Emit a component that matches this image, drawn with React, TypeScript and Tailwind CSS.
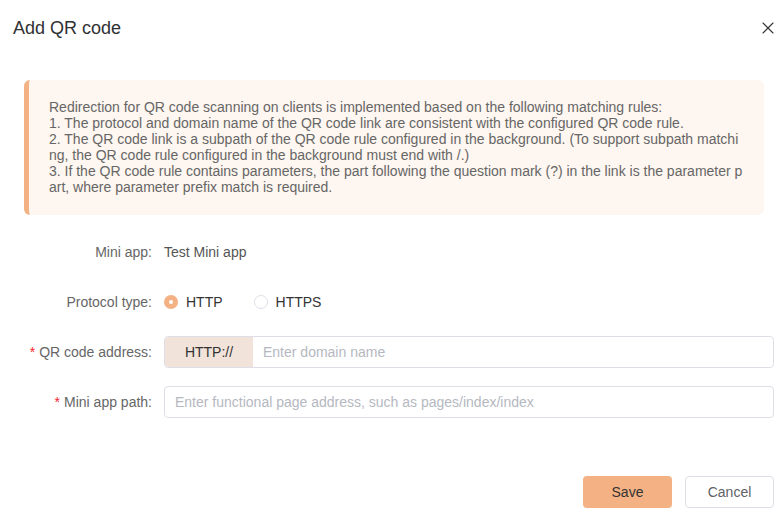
import { X } from 'lucide-react';

const rules = [
  'Redirection for QR code scanning on clients is implemented based on the following matching rules:',
  '1. The protocol and domain name of the QR code link are consistent with the configured QR code rule.',
  '2. The QR code link is a subpath of the QR code rule configured in the background. (To support subpath matching, the QR code rule configured in the background must end with /.)',
  '3. If the QR code rule contains parameters, the part following the question mark (?) in the link is the parameter part, where parameter prefix match is required.',
];

const FormRow = ({ label, required = false, children }: { label: string; required?: boolean; children: React.ReactNode }) => (
  <div className="flex items-center h-8">
    <label className="w-[164px] pr-3 text-right text-[14px] text-[#666] shrink-0">
      {required && <span className="text-[#f5222d] mr-1">*</span>}
      {label}
    </label>
    <div className="flex-1 flex items-center">{children}</div>
  </div>
);

const Radio = ({ checked, label }: { checked?: boolean; label: string }) => (
  <label className="flex items-center gap-2 text-[14px] text-[#333] cursor-pointer">
    {checked ? (
      <span className="w-[14px] h-[14px] rounded-full bg-[#f4b183] flex items-center justify-center">
        <span className="w-1 h-1 rounded-full bg-white" />
      </span>
    ) : (
      <span className="w-[14px] h-[14px] rounded-full border border-[#dcdfe6] bg-white" />
    )}
    {label}
  </label>
);

export default function App() {
  return (
    <div className="w-[783px] h-[523px] bg-white font-['Liberation_Sans',Arial,sans-serif] flex flex-col">
      <div className="flex items-center justify-between pl-[13px] pr-[5px] pt-4 h-10">
        <h2 className="text-[18px] leading-6 text-[#303133]">Add QR code</h2>
        <button className="text-[#333] cursor-pointer">
          <X className="w-[20px] h-[20px]" strokeWidth={1.3} />
        </button>
      </div>

      <div className="mt-10 ml-6 w-[740px] rounded-md bg-[#fef6f0] border-l-[5px] border-[#f4b183] pl-5 pr-[20px] pt-[19px] pb-5">
        <div className="text-[14px] leading-4 text-[#666] break-all">
          {rules.map((r) => (
            <p key={r}>{r}</p>
          ))}
        </div>
      </div>

      <div className="mt-[21px] flex flex-col gap-[18px] pr-[9px]">
        <FormRow label="Mini app:">
          <span className="text-[14px] text-[#555]">Test Mini app</span>
        </FormRow>
        <FormRow label="Protocol type:">
          <div className="flex items-center gap-[31px]">
            <Radio checked label="HTTP" />
            <Radio label="HTTPS" />
          </div>
        </FormRow>
        <FormRow label="QR code address:" required>
          <div className="flex w-full h-8 border border-[#dcdfe6] rounded">
            <span className="w-[88px] shrink-0 bg-[#f1e3d9] flex items-center justify-center text-[14px] text-[#333] rounded-l">
              HTTP://
            </span>
            <input
              className="flex-1 px-[10px] text-[14px] outline-none placeholder:text-[#b5b8bf] rounded-r"
              placeholder="Enter domain name"
            />
          </div>
        </FormRow>
        <FormRow label="Mini app path:" required>
          <input
            className="w-full h-8 border border-[#dcdfe6] rounded px-[10px] text-[14px] outline-none placeholder:text-[#b5b8bf]"
            placeholder="Enter functional page address, such as pages/index/index"
          />
        </FormRow>
      </div>

      <div className="mt-auto mb-[15px] flex justify-end gap-[13px] pr-[9px]">
        <button className="w-[89px] h-8 rounded bg-[#f4b183] text-[14px] text-[#333] cursor-pointer">Save</button>
        <button className="w-[89px] h-8 rounded border border-[#dcdfe6] bg-white text-[14px] text-[#606266] cursor-pointer">
          Cancel
        </button>
      </div>
    </div>
  );
}
